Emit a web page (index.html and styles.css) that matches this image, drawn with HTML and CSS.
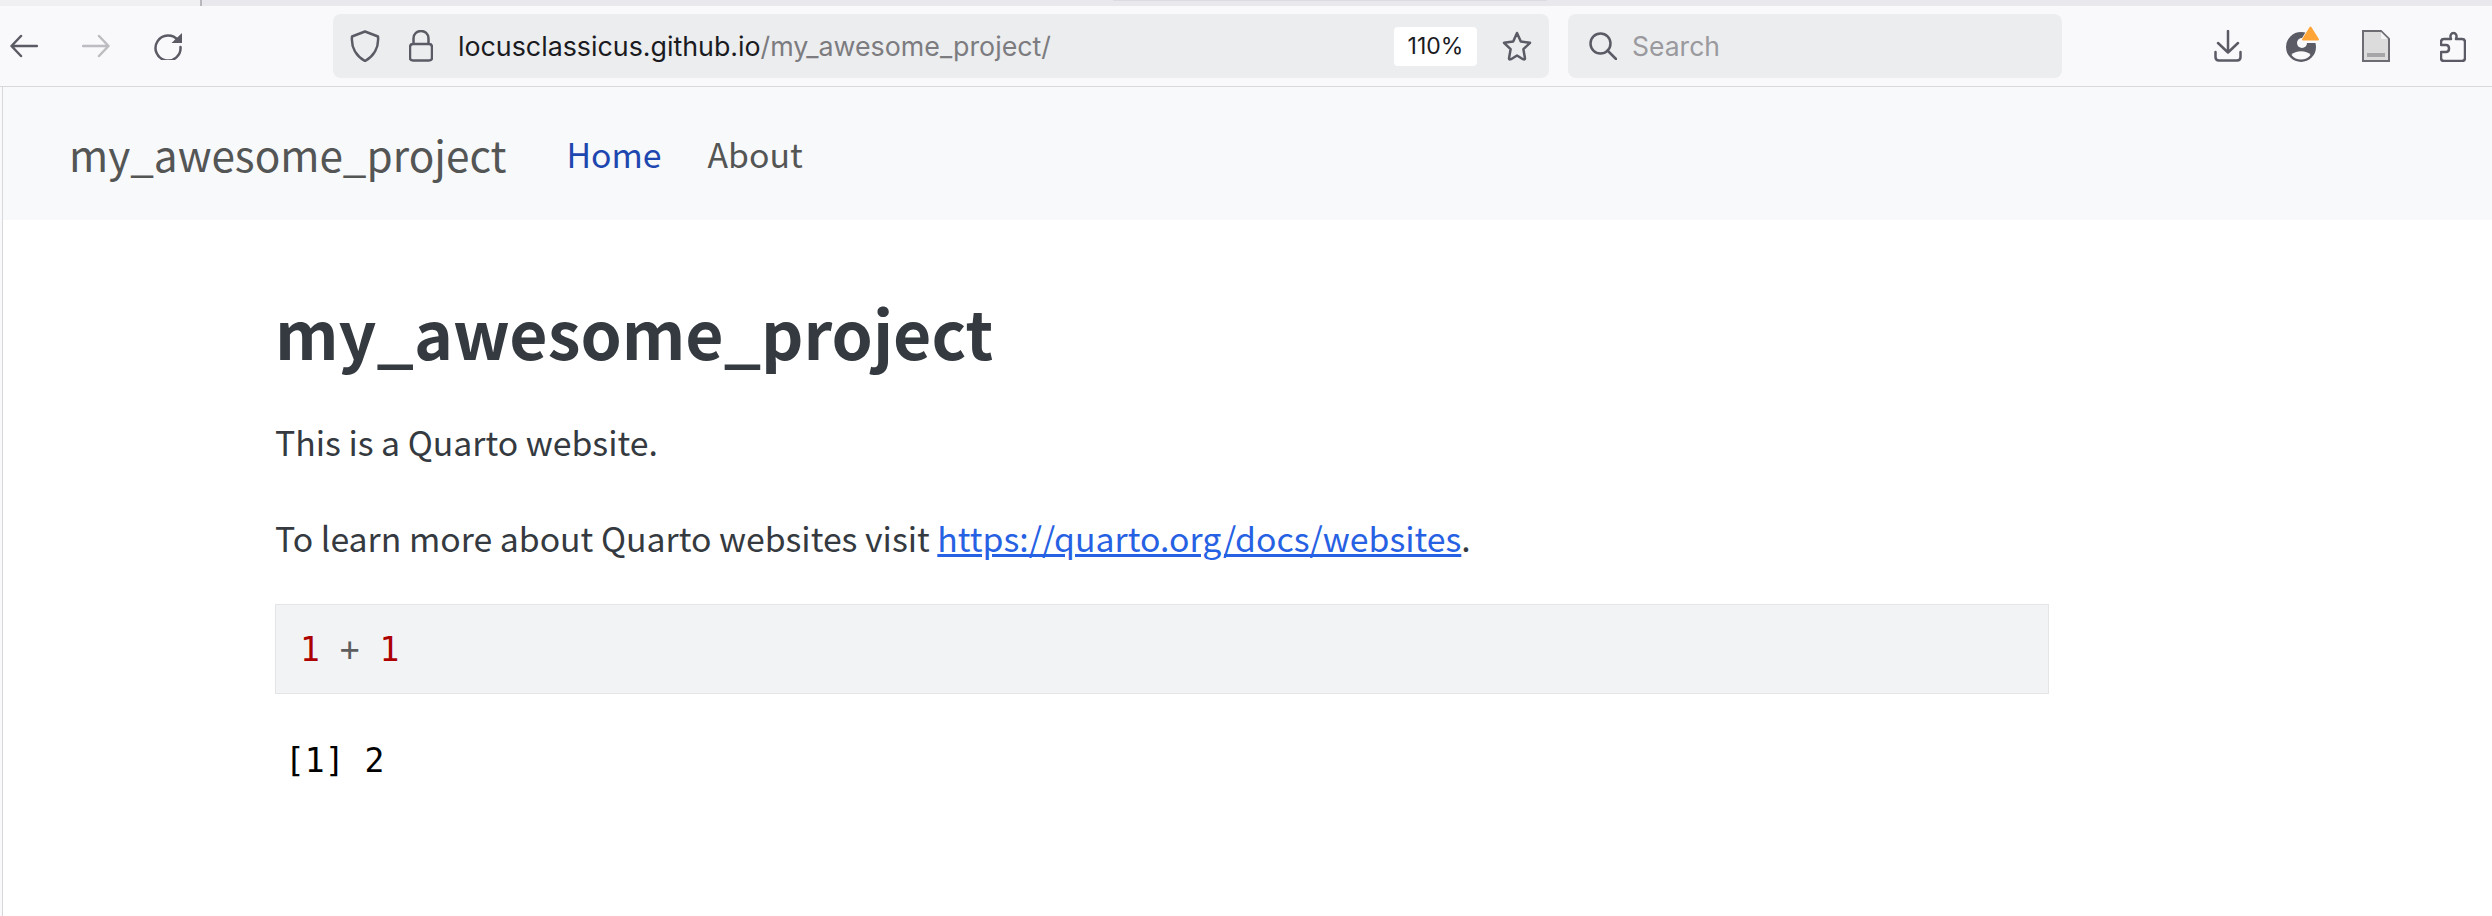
FILE: index.html
```html
<!DOCTYPE html>
<html lang="en">
<head>
    <meta charset="UTF-8">
    <meta name="viewport" content="width=device-width, initial-scale=1.0">
    <title>my_awesome_project</title>
    <link rel="stylesheet" href="styles.css">
</head>

<body>
    <!-- Browser chrome -->
    <div class="tabstrip">
        <div class="tab-left"></div>
        <div class="tab-active"></div>
    </div>
    <div class="toolbar">
        <svg class="icon nav-back" width="28" height="24" viewBox="0 0 28 24"><path d="M27 12H2M11 2L1.500 12L11 22" /></svg>
        <svg class="icon icon-faded nav-forward" width="28" height="24" viewBox="0 0 28 24"><path d="M1 12H26M17 2L26.500 12L17 22" /></svg>
        <svg class="icon nav-reload" width="28" height="28" viewBox="0 0 28 28"><path d="M24 8.500A12.500 12.500 0 1 0 26.500 15" /><path class="solid" d="M28 1V11H17.500Z" /></svg>

        <div class="address-bar">
            <svg class="icon shield" width="30" height="32" viewBox="0 0 30 32"><path d="M15 1.500L28 6.500C29 17 24 26 15 31C6 26 1 17 2 6.500Z" /></svg>
            <svg class="icon lock" width="24" height="32" viewBox="0 0 24 32"><path d="M4.500 14V8.500C4.500 -1.500 19.500 -1.500 19.500 8.500V14M4 14H20Q23 14 23 17V28Q23 30.500 20 30.500H4Q1 30.500 1 28V17Q1 14 4 14Z" /></svg>
            <span class="url"><span class="url-host">locusclassicus.github.io</span>/my_awesome_project/</span>
            <span class="zoom-pill">110%</span>
            <svg class="icon star" width="30" height="30" viewBox="0 0 30 30"><path d="M15 2L18.800 10.500L28 11.800L21.400 18.200L23 27.500Q23 29 21 28.200L15 24.500L9 28.200Q7 29 7 27.500L8.600 18.200L2 11.800L11.200 10.500Z" /></svg>
        </div>

        <div class="search-bar">
            <svg class="icon" width="28" height="28" viewBox="0 0 28 28"><circle cx="11.500" cy="11.500" r="10" /><path d="M18.500 18.500L27 27" /></svg>
            <span class="search-text">Search</span>
        </div>

        <svg class="icon tool-download" width="28" height="32" viewBox="0 0 28 32"><path d="M14 1V22M4 13L14 22.500L24 13M1.500 22V27Q1.500 30.500 5 30.500H23Q26.500 30.500 26.500 27V22" /></svg>
        <svg class="tool-profile" width="34" height="40" viewBox="0 0 34 40">
            <circle cx="15" cy="21" r="15" fill="#5b5b66" />
            <circle cx="16" cy="17" r="5" fill="#f9f9fb" />
            <path fill="#f9f9fb" d="M5.500 29C9 24 21 24 24.500 29C20 35 10 35 5.500 29Z" />
            <path fill="#f9f9fb" d="M24.500 -2L36 17H13Z" />
            <path fill="#ffa436" stroke="#ffa436" stroke-width="2" stroke-linejoin="round" d="M24.500 1.500L32 13.500H17Z" />
        </svg>
        <svg class="tool-doc" width="28" height="32" viewBox="0 0 28 32">
            <path fill="#dcdcdc" stroke="#6c6c72" stroke-width="2" d="M1 1H19L27 9V31H1Z" />
            <path fill="#f4f4f4" d="M19 2V9H26Z" />
            <rect x="5" y="23" width="18" height="4" fill="#a6a6a8" />
        </svg>
        <svg class="icon tool-puzzle" width="26" height="32" viewBox="0 0 26 32"><path d="M8 9H11C8 1 19 1 16 9H22Q25 9 25 12V28Q25 31 22 31H4Q1 31 1 28V22H6C10 22 10 15 6 15H1V12Q1 9 4 9Z" /></svg>
    </div>

    <!-- Page -->
    <div class="page">
        <nav class="navbar">
            <a class="brand">my_awesome_project</a>
            <a class="nav-link active">Home</a>
            <a class="nav-link">About</a>
        </nav>

        <main class="content">
            <h1>my_awesome_project</h1>
            <p>This is a Quarto website.</p>
            <p>To learn more about Quarto websites visit <a class="link">https://quarto.org/docs/websites</a>.</p>
            <pre class="code"><span class="num">1</span> <span class="op">+</span> <span class="num">1</span></pre>
            <pre class="output">[1] 2</pre>
        </main>
    </div>
</body>
</html>
```

FILE: styles.css
```css
/* Basic page setup */
body {
    margin: 0;
    background-color: #f9f9fb;
    font-family: "Noto Sans CJK SC", "Noto Sans", sans-serif;
    overflow: hidden;
}

/* Tab strip at the very top */
.tabstrip {
    display: flex;
    height: 6px;
    background-color: #e9e8ec;
}

.tab-left {
    width: 200px;
    background-color: #f0eff2;
    border-right: 2px solid #b8b8bc;
}

.tab-active {
    width: 434px;
    height: 1px;
    margin-left: 911px;
    background-color: #dcdbe0;
}

/* Toolbar */
.toolbar {
    display: flex;
    align-items: center;
    height: 80px;
    padding-left: 10px;
    background-color: #f9f9fb;
    border-bottom: 1px solid #d8d8dc;
}

.icon {
    flex: none;
    fill: none;
    stroke: #5b5b66;
    stroke-width: 2.5;
    stroke-linecap: round;
    stroke-linejoin: round;
}

.icon .solid {
    fill: #5b5b66;
    stroke: none;
}

.icon-faded {
    stroke: #bdbdc1;
}

.nav-forward,
.nav-reload {
    margin-left: 44px;
}

.address-bar {
    display: flex;
    align-items: center;
    flex: none;
    width: 1216px;
    height: 64px;
    margin-left: 151px;
    padding-left: 17px;
    box-sizing: border-box;
    background-color: #ecedef;
    border-radius: 8px;
}

.lock {
    margin-left: 29px;
}

.url {
    margin-left: 25px;
    font-family: Inter, sans-serif;
    font-size: 26.800px;
    color: #7c7c80;
    white-space: nowrap;
}

.url-host {
    color: #1b1b1f;
}

.zoom-pill {
    margin-left: auto;
    width: 83px;
    height: 39px;
    line-height: 39px;
    text-align: center;
    background-color: #fff;
    border-radius: 4px;
    font-family: Inter, sans-serif;
    font-size: 23px;
    color: #1b1b1f;
}

.star {
    margin: 0 17px 0 25px;
}

.search-bar {
    display: flex;
    align-items: center;
    flex: none;
    width: 494px;
    height: 64px;
    margin-left: 19px;
    padding-left: 21px;
    box-sizing: border-box;
    background-color: #ecedef;
    border-radius: 8px;
}

.search-text {
    margin-left: 15px;
    font-family: Inter, sans-serif;
    font-size: 26.500px;
    color: #9a9a9e;
}

.tool-download {
    margin-left: 152px;
}

.tool-profile {
    margin-left: 44px;
}

.tool-doc {
    margin-left: 42px;
}

.tool-puzzle {
    margin-left: 50px;
}

/* Page area */
.page {
    min-height: 829px;
    margin-left: 2px;
    background-color: #fff;
    border-left: 1px solid #d8d8dc;
}

.navbar {
    display: flex;
    align-items: center;
    height: 133px;
    padding-left: 66px;
    background-color: #f8f9fa;
}

.brand {
    font-size: 42.300px;
    color: #545555;
    margin-right: 60px;
}

.nav-link {
    font-size: 33.800px;
    color: #545555;
    margin-right: 46px;
}

.nav-link.active {
    color: #1e47b0;
}

.content {
    width: 1774px;
    margin-left: 272px;
    padding-top: 72px;
    color: #343a40;
}

h1 {
    margin: 0 0 41px 0;
    font-size: 66px;
    font-weight: 700;
    line-height: 1.2;
}

p {
    margin: 0 0 36px 0;
    font-size: 33.800px;
    line-height: 60px;
}

.link {
    color: #2761e3;
    text-decoration: underline;
}

.code {
    margin: 0;
    height: 88px;
    padding-left: 24px;
    background-color: #f1f3f5;
    border: 1px solid #e4e5e7;
    font-family: "DejaVu Sans Mono", monospace;
    font-size: 33px;
    line-height: 90px;
}

.num {
    color: #ad0000;
}

.op {
    color: #5e5e5e;
}

.output {
    margin: 47px 0 0 0;
    padding-left: 10px;
    font-family: "DejaVu Sans Mono", monospace;
    font-size: 33px;
    color: #000;
}
```
